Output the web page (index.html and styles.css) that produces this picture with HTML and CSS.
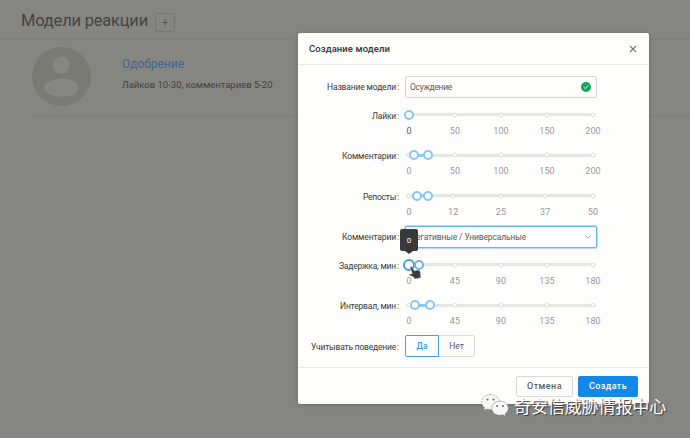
FILE: index.html
```
<!DOCTYPE html>
<html lang="ru">
<head>
<meta charset="utf-8">
<title>Модели реакции</title>
<link rel="stylesheet" href="styles.css">
</head>
<body>
<main class="page">
  <header class="page-head"><h1><span class="fit" data-w="127">Модели реакции</span></h1><button class="add">+</button></header>
  <article class="model">
    <svg class="avatar" viewBox="0 0 58 58"><circle cx="29" cy="29" r="29" fill="#7a7a74"/><circle cx="29" cy="17.500" r="8.500" fill="#868682"/><ellipse cx="29" cy="40" rx="17" ry="9" fill="#868682"/></svg>
    <div class="model-text"><h2><span class="fit" data-w="62">Одобрение</span></h2><p><span class="fit" data-w="150.500">Лайков 10-30, комментариев 5-20</span></p></div>
  </article>
</main>
<section class="modal">
  <header class="modal-head"><h3><span class="fit" data-w="81">Создание модели</span></h3>
    <svg class="close" viewBox="0 0 8 8"><path d="M1 1l6 6M7 1L1 7" stroke="#777" stroke-width="1.2"/></svg>
  </header>
  <form class="form">
    <div class="row"><label><span class="fit" data-w="69">Название модели</span><i>:</i></label>
      <div class="field"><span class="fit" data-w="42">Осуждение</span><svg class="ok" viewBox="0 0 10 10"><circle cx="5" cy="5" r="5" fill="#11a65b"/><path d="M2.7 5.1l1.6 1.6 3-3.2" fill="none" stroke="#d8f5e5" stroke-width="1"/></svg></div></div>
    <div class="row tall"><label><span class="fit" data-w="24">Лайки</span><i>:</i></label><div class="slider" data-marks="0,50,100,150,200" data-handles="0"></div></div>
    <div class="row tall"><label><span class="fit" data-w="54">Комментарии</span><i>:</i></label><div class="slider" data-marks="0,50,100,150,200" data-handles="5,19"></div></div>
    <div class="row tall"><label><span class="fit" data-w="33">Репосты</span><i>:</i></label><div class="slider" data-marks="0,12,25,37,50" data-handles="7.5,19"></div></div>
    <div class="row"><label><span class="fit" data-w="54">Комментарии</span><i>:</i></label>
      <div class="field select"><span class="fit" data-w="116">Негативные / Универсальные</span><svg class="arrow" viewBox="0 0 6 4"><path d="M.7.7L3 3.1 5.3.7" fill="none" stroke="#aaa"/></svg></div></div>
    <div class="row tall"><label><span class="fit" data-w="57">Задержка, мин</span><i>:</i></label><div class="slider active" data-marks="0,45,90,135,180" data-handles="0,10">
      <span class="tip">0</span>
      <svg class="hand" viewBox="0 0 14 15"><path d="M1.2 1.1Q2.7-.3 3.8 1.5L5.5 5.1 9.3 4.4Q11.9 4.2 12.3 7L12.7 12.5 6.2 14 4.8 11.8.8 9.9Q.1 8.5 2 8.2L3.6 8.4Z" fill="#393b3e" stroke="#d9dddf" stroke-width=".5"/></svg>
    </div></div>
    <div class="row tall"><label><span class="fit" data-w="56">Интервал, мин</span><i>:</i></label><div class="slider" data-marks="0,45,90,135,180" data-handles="5.5,21"></div></div>
    <div class="row"><label><span class="fit" data-w="85">Учитывать поведение</span><i>:</i></label><div class="choice"><b>Да</b><span>Нет</span></div></div>
  </form>
  <footer class="modal-foot"><button class="btn"><span class="fit" data-w="35">Отмена</span></button><button class="btn primary"><span class="fit" data-w="38">Создать</span></button></footer>
</section>
<div class="watermark">
  <svg viewBox="0 0 28 24"><g stroke="#777" stroke-width=".5"><path stroke-dasharray="2 1" d="M9.5.5C4.5.5.5 3.8.5 8c0 2.3 1.2 4.400 3.200 5.800L3 16.500l3-1.600c1.100.4 2.300.6 3.500.6 5 0 9-3.300 9-7.500S14.500.5 9.500.5Z" fill="#f7f7f5"/><path d="M19 7.200c-4.700 0-8.300 3.100-8.300 7s3.600 7 8.300 7c1.100 0 2-.1 2.900-.4l2.700 1.700-.6-2.700c2-1.300 3.300-3.300 3.300-5.600 0-3.900-3.600-7-8.300-7Z" fill="#f6f6f6"/></g><g fill="#666"><circle cx="6.500" cy="5.500" r="1"/><circle cx="12.500" cy="5.500" r="1"/><circle cx="16.200" cy="12" r="1"/><circle cx="22" cy="12" r="1"/></g></svg>
  <span>奇安信威胁情报中心</span>
</div>
<script src="sliders.js"></script>
</body>
</html>
```
FILE: styles.css
```
* { box-sizing: border-box; }
body { margin: 0; width: 690px; height: 438px; overflow: hidden; position: relative; background: #858582; font: 8.5px Roboto, "Noto Sans CJK SC", sans-serif; color: #454545; }
h1, h2, h3, p { margin: 0; font-weight: 400; }
button { font: inherit; padding: 0; }
.fit { display: inline-block; white-space: nowrap; }
.page-head { height: 40px; padding: 2px 0 0 21px; display: flex; align-items: center; gap: 7px; border-bottom: 1px solid #7f7f7c; color: #454543; }
h1 { font-size: 16.5px; line-height: 20px; width: 127px; padding-top: 1px; }
.add { width: 20px; height: 19px; margin-top: 4px; background: none; border: 1px solid #767673; border-radius: 2px; color: #555553; font-size: 10px; line-height: 15px; }
.model { margin-left: 31px; height: 77px; padding: 7px 0 0 1px; display: flex; gap: 31px; border-bottom: 1px solid #7e7e7b; }
.avatar { width: 59px; height: 59px; }
.model-text { padding-top: 9px; }
h2 { color: #3d6694; font-size: 12px; line-height: 16px; }
.model p { color: #434341; font-size: 9.5px; line-height: 14px; margin-top: 6px; }
.modal { position: absolute; left: 298px; top: 33px; width: 351px; height: 371px; background: #fdfdfc; border-radius: 2px; box-shadow: 0 1px 4px #0003; display: flex; flex-direction: column; }
.modal-head { height: 32px; flex: none; padding: 0 12px 0 11px; display: flex; justify-content: space-between; align-items: center; border-bottom: 1px solid #ebebea; }
h3 { font-size: 9.5px; font-weight: 500; color: #333; }
.close { width: 8px; height: 8px; }
.form { flex: 1; padding-top: 11px; }
.row { height: 28.5px; display: flex; align-items: flex-start; }
.row.tall { height: 40.5px; }
.row label { width: 102px; margin-right: 6px; height: 22px; line-height: 22px; display: flex; justify-content: flex-end; gap: 1px; color: #3a3a3a; }
.row label i { font-style: normal; width: 3px; }
.field { width: 192px; height: 22px; margin-left: -1px; border: 1px solid #d6d9dc; border-radius: 2px; padding: 0 5px 0 4px; display: flex; align-items: center; justify-content: space-between; color: #5c5c5c; }
.ok { width: 10px; height: 10px; }
.select { border-color: #65b4ec; box-shadow: 0 0 0 1px #b9dcf5; }
.arrow { width: 6px; height: 4px; }
.slider { position: relative; top: -.6px; width: 184px; height: 38px; margin-left: 3px; }
.rail { height: 3px; margin: 9.5px -3px 0; background: #e6e6e5; border-radius: 2px; }
.range { position: absolute; top: 9.5px; height: 3px; background: #91ccf5; }
.dot, .handle { position: absolute; top: 11px; transform: translate(-50%, -50%); border-radius: 50%; background: #fefefe; }
.dot { width: 5px; height: 5px; border: 1px solid #dededd; }
.handle { width: 10px; height: 10px; border: 2px solid #8ac6f0; }
.active .handle { border-color: #6fb1eb; }
.active .handle.first { width: 12px; height: 12px; border: 2px solid #4a99e4; }
.mark { position: absolute; top: 21px; line-height: 12px; transform: translateX(-50%); color: #999; font-size: 9px; letter-spacing: .1px; }
.mark.on { color: #555; }
.tip { position: absolute; z-index: 3; left: -9px; top: -25.400px; width: 18px; height: 22px; border-radius: 2px; background: #37393b; color: #fff; font-size: 8px; line-height: 23px; text-align: center; }
.tip::after { content: ""; position: absolute; left: 5px; top: 22px; border: 4px solid transparent; border-top: 3px solid #37393b; border-bottom: 0; }
.hand { position: absolute; z-index: 3; left: 0; top: 12px; width: 13px; height: 14px; }
.choice { display: flex; width: 70px; height: 22px; margin: -.5px 0 0 -1px; line-height: 20px; text-align: center; }
.choice b { width: 34px; border: 1px solid #4a9ee5; border-radius: 2px 0 0 2px; color: #369aea; font-weight: 500; }
.choice span { flex: 1; border: 1px solid #dddddc; border-left: 0; border-radius: 0 2px 2px 0; color: #5c5c5c; }
.modal-foot { height: 37px; padding: 7.5px 11px 0; display: flex; justify-content: flex-end; gap: 5px; border-top: 1px solid #ebebea; }
.btn { width: 57px; height: 21px; border: 1px solid #d9d9d8; border-radius: 2px; background: #fefefe; color: #5c5c5c; font-size: 9px; font-weight: 500; }
.btn.primary { width: 60px; background: #1289e9; border-color: #1289e9; color: #fff; }
.watermark { position: absolute; z-index: 5; left: 481px; top: 394px; display: flex; gap: 5px; color: #fff; }
.watermark svg { width: 28px; height: 24px; }
.watermark span { font: 17px/23px "Noto Sans CJK SC", sans-serif; letter-spacing: -.1px; margin-top: -.5px; text-shadow: 1px 1px 1px #333; white-space: nowrap; }
```
FILE: sliders.js
```
document.querySelectorAll('.fit').forEach(el => {
  const spacing = (Number(el.dataset.w) - el.getBoundingClientRect().width) / el.textContent.length;
  el.style.letterSpacing = spacing + 'px';
});
// Build the rail, stops, labels and handles of each slider.
document.querySelectorAll('.slider').forEach(slider => {
  const marks = slider.dataset.marks.split(',').map(Number);
  const handles = slider.dataset.handles.split(',').map(Number);
  const add = (cls, left, text = '') => {
    const el = document.createElement('div');
    el.className = cls;
    if (left !== null) el.style.left = left + 'px';
    el.textContent = text;
    slider.append(el);
    return el;
  };
  add('rail', null);
  marks.forEach((mark, i) => {
    const x = mark / marks[4] * 184;
    add('dot', x);
    add('mark' + (handles.length === 1 && i === 0 ? ' on' : ''), x, mark);
  });
  if (handles.length === 2) add('range', handles[0]).style.width = handles[1] - handles[0] + 'px';
  handles.forEach((x, i) => add('handle' + (i === 0 ? ' first' : ''), x));
});
```
